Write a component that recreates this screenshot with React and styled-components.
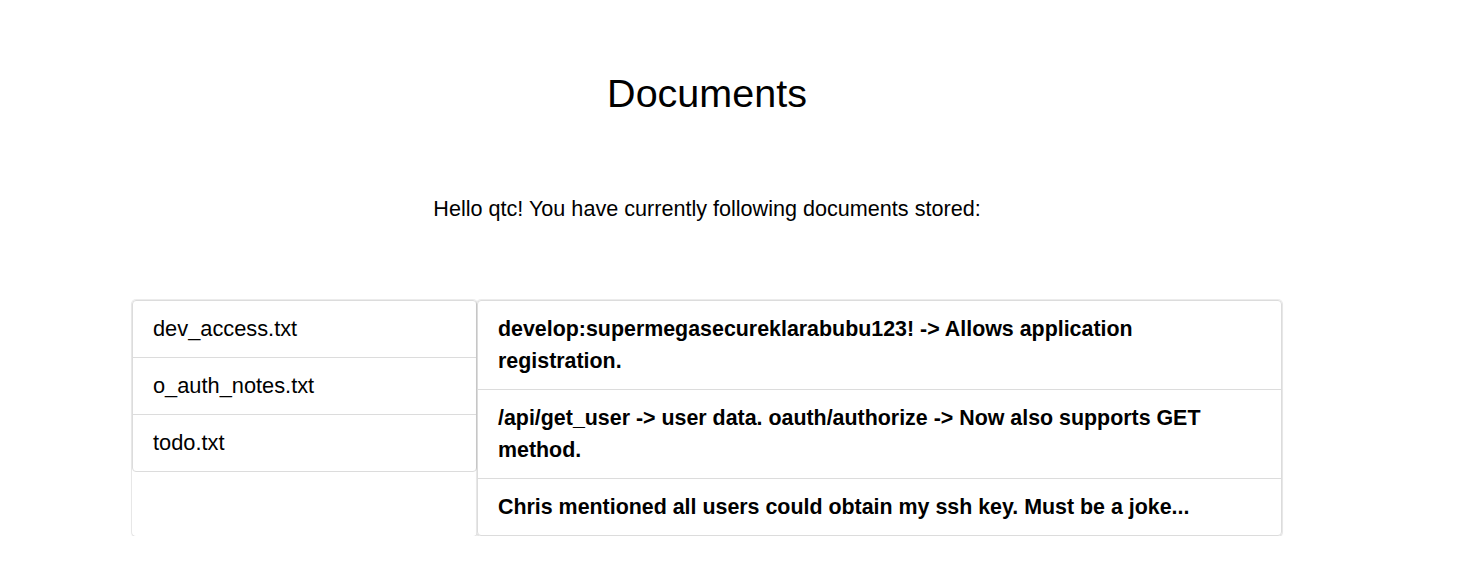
import React from 'react';
import styled, { createGlobalStyle } from 'styled-components';

const Global = createGlobalStyle`
  body {
    margin: 0;
    background: #fff;
    font-family: "Liberation Sans", Arial, sans-serif;
    color: #000;
  }
`

const Page = styled.div`
  width: 1414px;
  display: flex;
  flex-direction: column;
  align-items: center;
`

const Title = styled.h1`
  margin: 69px 0 0;
  font-size: 39.5px;
  line-height: 48px;
  font-weight: 400;
`

const Intro = styled.p`
  margin: 77px 0 0;
  font-size: 21.6px;
  line-height: 30px;
`

const Row = styled.div`
  margin-top: 76px;
  display: flex;
  align-items: stretch;
`

const Card = styled.div`
  width: ${p => p.width}px;
  box-sizing: border-box;
  border-radius: 4px;
  background: #fff;
  box-shadow: 0 0 0 1px rgba(0, 0, 0, 0.07), 0 1px 2px rgba(0, 0, 0, 0.1);
`

const List = styled.ul`
  list-style: none;
  margin: 0;
  padding: 0;
  border: 1px solid #dcdcdc;
  border-radius: 4px;
`

const Item = styled.li`
  padding: 12px 20px;
  font-size: ${p => (p.bold ? '21.4px' : '21.8px')};
  line-height: 32px;
  font-weight: ${p => (p.bold ? 700 : 400)};
  border-top: 1px solid #dcdcdc;
  &:first-child {
    border-top: none;
  }
`

const files = ['dev_access.txt', 'o_auth_notes.txt', 'todo.txt']

const notes = [
  'develop:supermegasecureklarabubu123! -> Allows application registration.',
  '/api/get_user -> user data. oauth/authorize -> Now also supports GET method.',
  'Chris mentioned all users could obtain my ssh key. Must be a joke...',
]

const App = () => {
  return (
    <>
      <Global />
      <Page>
        <Title>Documents</Title>
        <Intro>Hello qtc! You have currently following documents stored:</Intro>
        <Row>
          <Card width={345}>
            <List>
              {files.map(f => (
                <Item key={f}>{f}</Item>
              ))}
            </List>
          </Card>
          <Card width={805}>
            <List>
              {notes.map(n => (
                <Item key={n} bold>{n}</Item>
              ))}
            </List>
          </Card>
        </Row>
      </Page>
    </>
  )
}

export default App
